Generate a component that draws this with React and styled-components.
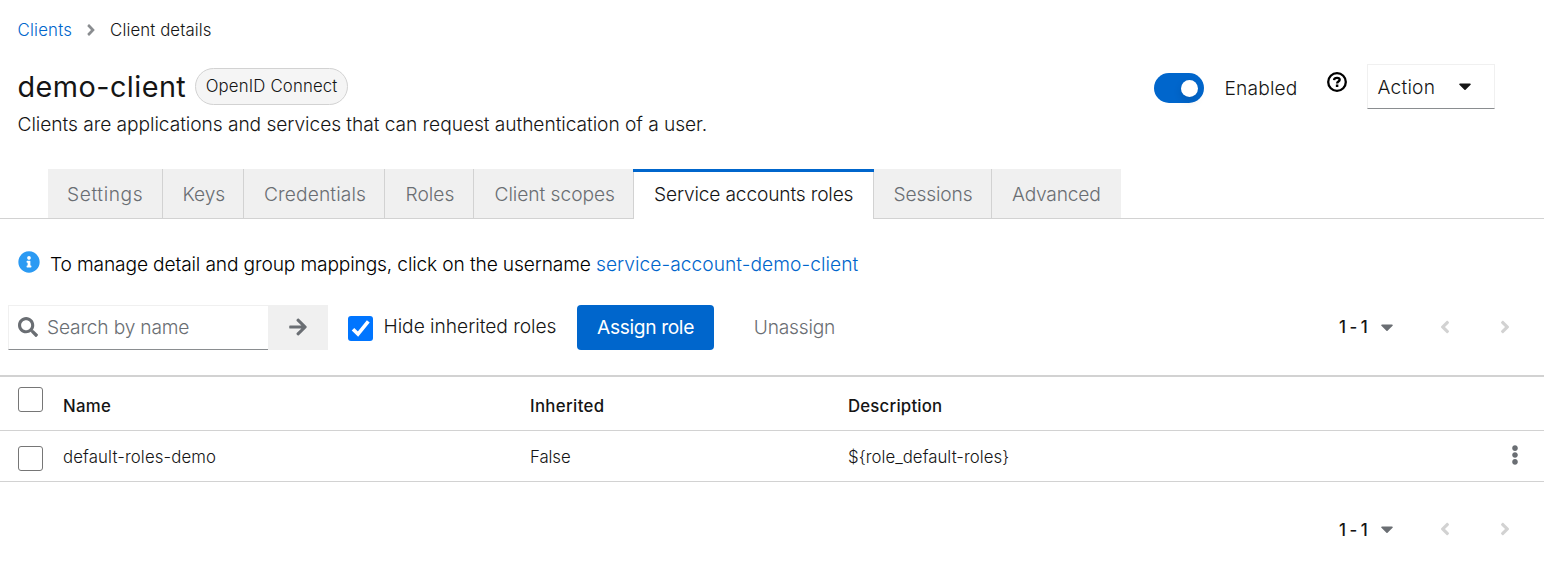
import React from 'react';
import styled, { createGlobalStyle, css } from 'styled-components';
import { FaAngleRight, FaAngleLeft, FaInfoCircle, FaSearch, FaArrowRight, FaCaretDown, FaEllipsisV } from 'react-icons/fa';

const Global = createGlobalStyle`
  * { box-sizing: border-box; }
  body { margin: 0; background: #fff; color: #151515; font: 300 19.2px/30px Inter, "Liberation Sans", sans-serif; }
  button, input { font: inherit; color: inherit; }
`;

const Text = styled.span`
  letter-spacing: ${p => p.$track || 0}px;
  white-space: nowrap;
`;
const Link = styled.a`
  color: #06c;
  text-decoration: none;
  letter-spacing: ${p => p.$track || 0}px;
`;

const Page = styled.main`
  width: 1544px;
  height: 575px;
  overflow: hidden;
`;

const Breadcrumb = styled.nav`
  display: flex;
  align-items: center;
  height: 60px;
  padding-left: 17.5px;
  font-size: 16.8px;
  svg { width: 18px; height: 18px; margin: 0 10.5px 0 9.5px; color: #8a8d90; }
`;

const Header = styled.header`
  display: flex;
  justify-content: space-between;
  height: 109px;
  padding: 4px 49px 0 17.5px;
`;
const TitleLine = styled.div`
  display: flex;
  align-items: center;
  gap: 9px;
  height: 45px;
`;
const Title = styled.h1`
  margin: 0;
  font-size: 28.8px;
  font-weight: 400;
  letter-spacing: 0.45px;
`;
const Badge = styled.span`
  display: flex;
  align-items: center;
  width: 153px;
  height: 37px;
  padding-left: 9.5px;
  padding-bottom: 1px;
  border: 1px solid #d2d2d2;
  border-radius: 19px;
  background: #f5f5f5;
  font-size: 16.8px;
`;
const Description = styled.p`
  margin: 0;
  letter-spacing: -0.065px;
`;
const HeaderActions = styled.div`
  display: flex;
  align-items: center;
  height: 45px;
`;
const Switch = styled.button`
  display: flex;
  align-items: center;
  justify-content: flex-end;
  width: 50px;
  height: 30px;
  margin: 3px 20.5px 0 0;
  padding: 0 6px;
  border: 0;
  border-radius: 15px;
  background: #06c;
`;
const Knob = styled.span`
  width: 17px;
  height: 17px;
  border-radius: 50%;
  background: #fff;
  box-shadow: 0 4px 8px rgba(3, 3, 3, 0.12);
`;
const SwitchLabel = styled(Text)`
  width: 102.5px;
  padding-top: 3px;
`;
const HelpIcon = styled.svg`
  width: 20px;
  height: 20px;
  margin: -9px 20px 0 0;
`;
const ActionMenu = styled.button`
  display: flex;
  align-items: center;
  justify-content: space-between;
  width: 128px;
  height: 45px;
  padding: 0 21px 0 9.5px;
  border: 1px solid #f0f0f0;
  border-bottom-color: #8a8d90;
  background: #fff;
  svg { width: 16px; height: 20px; margin-top: -2px; }
`;

const Tabs = styled.div`
  display: flex;
  height: 50px;
  padding-left: 48px;
  background: linear-gradient(#d2d2d2, #d2d2d2) bottom / 100% 1px no-repeat;
`;
const Tab = styled.button`
  width: ${p => p.$width}px;
  height: 49px;
  padding: 1px 0 0 ${p => p.$inset || 20}px;
  border: 0;
  border-right: ${p => (p.$last ? 0 : 1)}px solid #d2d2d2;
  background: #f0f0f0;
  color: #6a6e73;
  text-align: left;
  ${p => p.$active && css`
    height: 50px;
    margin-left: -1px;
    padding-top: 0;
    border: 0;
    background:
      linear-gradient(#06c, #06c) top / 100% 3px no-repeat,
      linear-gradient(#d2d2d2, #d2d2d2) left / 1px 100% no-repeat,
      linear-gradient(#d2d2d2, #d2d2d2) right / 1px 100% no-repeat,
      #fff;
    color: #151515;
  `}
`;

const Notice = styled.div`
  display: flex;
  align-items: center;
  height: 86px;
  padding: 4px 0 0 18px;
  color: #000;
  svg { width: 22px; height: 22px; margin: -4px 10px 0 0; color: #2b9af3; }
`;

const Toolbar = styled.div`
  display: flex;
  height: 70px;
  padding-left: 8px;
`;
const SearchField = styled.label`
  display: flex;
  align-items: center;
  width: 260px;
  height: 45px;
  padding-left: 9px;
  border: 1px solid #f0f0f0;
  border-right: 0;
  border-bottom-color: #8a8d90;
  svg { flex: none; width: 20px; height: 20px; margin: -1px 9px 0 0; color: #6a6e73; }
`;
const SearchInput = styled.input`
  width: 200px;
  padding: 0;
  margin-top: -2px;
  border: 0;
  outline: 0;
  background: none;
  letter-spacing: -0.19px;
  &::placeholder { color: #6a6e73; opacity: 1; }
`;
const GoButton = styled.button`
  display: grid;
  place-items: center;
  width: 60px;
  height: 45px;
  padding: 0;
  border: 0;
  background: #f0f0f0;
  color: #6a6e73;
  svg { width: 20px; height: 20px; margin-top: -1px; }
`;
const Checkbox = styled.input.attrs({ type: 'checkbox' })`
  appearance: none;
  flex: none;
  display: block;
  width: 25px;
  height: 25px;
  margin: 0;
  border: 1.5px solid #767676;
  border-radius: 3px;
  background: #fff;
  &:checked {
    border: 0;
    background: #0075ff;
  }
`;
const FilterLabel = styled.label`
  display: flex;
  width: 229px;
  padding-left: 20px;
  gap: 10.5px;
`;
const CheckWrap = styled.span`
  display: grid;
  place-items: center;
  height: 25px;
  margin-top: 11px;
  > * { grid-area: 1 / 1; }
  svg { z-index: 1; width: 25px; height: 25px; }
`;
const FilterText = styled(Text)`
  padding-top: 6px;
`;
const Button = styled.button`
  height: 45px;
  width: ${p => (p.$primary ? 137 : 161)}px;
  margin-left: ${p => (p.$primary ? 20 : 0)}px;
  padding: 0 0 2px;
  border: 0;
  border-radius: 4px;
  background: ${p => (p.$primary ? '#06c' : 'transparent')};
  color: ${p => (p.$primary ? '#fff' : '#6a6e73')};
  font-weight: ${p => (p.$primary ? 400 : 300)};
`;
const PagerBar = styled.div`
  display: flex;
  align-items: center;
  width: 205px;
  height: ${p => (p.$bottom ? 47 : 43)}px;
  margin-left: auto;
  font-size: 16.8px;
  font-weight: 500;
`;
const PagerRange = styled.span`
  display: flex;
  align-items: center;
  width: 94px;
  flex: none;
  gap: 11.5px;
  padding-top: ${p => (p.$bottom ? 0 : 1)}px;
  svg { width: 16px; height: 20px; margin-top: ${p => (p.$bottom ? -2 : -1)}px; color: #6a6e73; }
`;
const PagerArrow = styled.button`
  display: grid;
  place-items: center;
  width: 24px;
  padding: 0;
  margin-right: 35.5px;
  margin-top: ${p => (p.$bottom ? -2 : 1)}px;
  flex: none;
  border: 0;
  background: none;
  color: #d2d2d2;
  svg { width: 20px; height: 20px; }
`;

const Grid = styled.div`
  border-top: 2px solid #d2d2d2;
  font-size: 16.8px;
`;
const GridRow = styled.div`
  display: grid;
  grid-template-columns: 45px 467px 318px 1fr 20px;
  align-items: center;
  height: ${p => (p.$head ? 54 : 51)}px;
  padding: 0 19px 0 18px;
  border-bottom: 1px solid #d2d2d2;
  font-weight: ${p => (p.$head ? 500 : 300)};
`;
const CheckCell = styled.span`
  padding-bottom: ${p => (p.$head ? 8 : 0)}px;
  padding-top: ${p => (p.$head ? 0 : 5)}px;
`;
const Cell = styled(Text)`
  padding-top: ${p => (p.$head ? 5 : 2)}px;
`;
const Kebab = styled(FaEllipsisV)`
  width: 20px;
  height: 20px;
  color: #6a6e73;
  margin-top: -2px;
`;
const Footer = styled.footer`
  display: flex;
  padding-top: 24px;
`;

const tabs = [
  ['Settings', 115, 0.6, 19], ['Keys', 81, -0.1, 19.5], ['Credentials', 141, 0.12], ['Roles', 89, 0, 20.5],
  ['Client scopes', 160, -0.05, 20.5], ['Service accounts roles', 241, -0.17, 21], ['Sessions', 118, -0.15, 19.5], ['Advanced', 129, -0.2],
];

const Pager = ({ bottom }) => (
  <PagerBar $bottom={bottom}>
    <PagerRange $bottom={bottom}><Text $track={-0.5}>1 - 1</Text><FaCaretDown /></PagerRange>
    <PagerArrow $bottom={bottom} aria-label="Previous"><FaAngleLeft /></PagerArrow>
    <PagerArrow $bottom={bottom} aria-label="Next"><FaAngleRight /></PagerArrow>
  </PagerBar>
);

export default function App() {
  return (
    <Page>
      <Global />
      <Breadcrumb>
        <Link $track={0.2}>Clients</Link>
        <FaAngleRight />
        <Text $track={0.1}>Client details</Text>
      </Breadcrumb>
      <Header>
        <div>
          <TitleLine>
            <Title>demo-client</Title>
            <Badge><Text $track={0.15}>OpenID Connect</Text></Badge>
          </TitleLine>
          <Description>Clients are applications and services that can request authentication of a user.</Description>
        </div>
        <HeaderActions>
          <Switch role="switch" aria-checked="true"><Knob /></Switch>
          <SwitchLabel $track={0.15}>Enabled</SwitchLabel>
          <HelpIcon viewBox="0 0 20 20" fill="none" stroke="#000">
            <circle cx="10" cy="10" r="8.8" strokeWidth="2.3" />
            <path d="M7 8.1C7.2 6.4 8.5 5.9 10 5.9c1.7 0 2.7.7 2.7 1.9 0 1.8-2.6 1.6-2.6 3.6" strokeWidth="2.3" />
            <path d="M10.1 12.5v2.5" strokeWidth="2.5" />
          </HelpIcon>
          <ActionMenu><Text $track={0.2}>Action</Text><FaCaretDown /></ActionMenu>
        </HeaderActions>
      </Header>
      <Tabs role="tablist">
        {tabs.map(([name, width, track, inset], i) => (
          <Tab key={name} role="tab" $width={width} $inset={inset} $active={i === 5} $last={i === tabs.length - 1}>
            <Text $track={track}>{name}</Text>
          </Tab>
        ))}
      </Tabs>
      <Notice>
        <FaInfoCircle />
        <Text $track={-0.155}>To manage detail and group mappings, click on the username{' '}
          <Link $track={0.04}>service-account-demo-client</Link>
        </Text>
      </Notice>
      <Toolbar>
        <SearchField><FaSearch /><SearchInput placeholder="Search by name" /></SearchField>
        <GoButton aria-label="Search"><FaArrowRight /></GoButton>
        <FilterLabel>
          <CheckWrap>
            <Checkbox defaultChecked />
            <svg viewBox="0 0 25 25" fill="none" stroke="#fff" strokeWidth="3.6"><path d="M5 13.2l5 4.9L20.3 5.3" /></svg>
          </CheckWrap>
          <FilterText $track={-0.03}>Hide inherited roles</FilterText>
        </FilterLabel>
        <Button $primary><Text $track={-0.36}>Assign role</Text></Button>
        <Button><Text $track={-0.22}>Unassign</Text></Button>
        <Pager />
      </Toolbar>
      <Grid>
        <GridRow $head>
          <CheckCell $head><Checkbox /></CheckCell>
          <Cell $head $track={0.3}>Name</Cell>
          <Cell $head $track={0.35}>Inherited</Cell>
          <Cell $head $track={0.2}>Description</Cell>
        </GridRow>
        <GridRow>
          <CheckCell><Checkbox /></CheckCell>
          <Cell $track={0.12}>default-roles-demo</Cell>
          <Cell $track={-0.1}>False</Cell>
          <Cell $track={0.04}>{'${role_default-roles}'}</Cell>
          <Kebab />
        </GridRow>
      </Grid>
      <Footer><Pager bottom /></Footer>
    </Page>
  );
}
